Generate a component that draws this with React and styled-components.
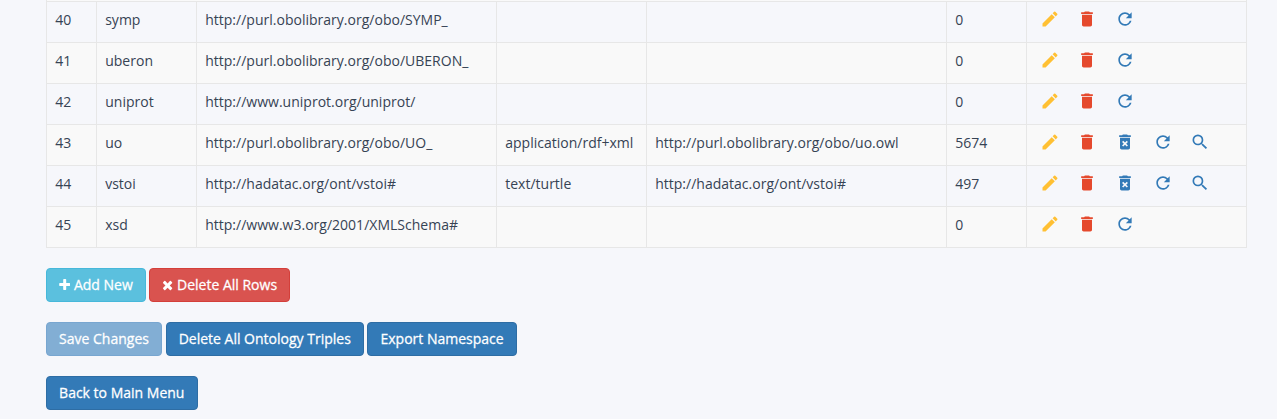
import React from "react";
import styled, { createGlobalStyle } from "styled-components";
import { MdEdit, MdDelete, MdDeleteForever, MdRefresh, MdSearch } from "react-icons/md";

const Global = createGlobalStyle`
  * { box-sizing: border-box; }
  body {
    margin: 0;
    background: #f6f7fb;
    color: #364354;
    font: 14px/20px "Open Sans", sans-serif;
    height: 419px;
    overflow: hidden;
  }
`;

const Page = styled.main`
  padding: 0 30px 0 46px;
`;

const Table = styled.div`
  border: 1px solid #e7e7e7;
  border-width: 0 1px;
`;

const PreviousRow = styled.div`
  height: 2px;
  background: #f9f9f9;
  border-bottom: 1px solid #e7e7e7;
`;

const Row = styled.div`
  display: grid;
  grid-template-columns: 50px 100px 300px 150px 300px 80px 1fr;
  height: 41px;
  border-bottom: 1px solid #e7e7e7;
  background: ${(p) => (p.$striped ? "#f9f9f9" : "transparent")};
`;

const Cell = styled.div`
  padding: 8px 8px 8px 8.2px;
  white-space: nowrap;
  border-right: 1px solid #e7e7e7;
  letter-spacing: 0.01px;
  &:last-child { border-right: 0; }
`;

const Actions = styled(Cell)`
  display: flex;
  align-items: center;
  gap: 17.6px;
  padding: 0 12.8px 5.6px;
`;

const Action = styled.span`
  display: flex;
  font-size: 20px;
  color: ${(p) => p.$color};
`;

const ButtonRow = styled.div`
  display: flex;
  gap: 3.5px;
  margin-top: 20px;
`;

const Button = styled.button`
  display: flex;
  align-items: center;
  gap: 3.4px;
  height: 34px;
  padding: 0 12.1px;
  border: 1px solid ${(p) => p.$border};
  border-radius: 4px;
  background: ${(p) => p.$bg};
  color: #fff;
  font: 400 14px/20px "Open Sans", sans-serif;
  -webkit-text-stroke: 0.27px #fff;
  white-space: nowrap;
`;

const Glyph = styled.svg`
  width: ${(p) => p.$width}px;
  height: 14px;
  fill: currentColor;
`;

const PlusIcon = () => (
  <Glyph $width={11.4} viewBox="192 0 1408 1792">
    <path d="M1600 736v192q0 40-28 68t-68 28h-416v416q0 40-28 68t-68 28h-192q-40 0-68-28t-28-68v-416h-416q-40 0-68-28t-28-68v-192q0-40 28-68t68-28h416v-416q0-40 28-68t68-28h192q40 0 68 28t28 68v416h416q40 0 68 28t28 68z" />
  </Glyph>
);

const TimesIcon = () => (
  <Glyph $width={11.2} viewBox="192 0 1408 1792">
    <path d="M1490 1322q0 40-28 68l-136 136q-28 28-68 28t-68-28l-294-294-294 294q-28 28-68 28t-68-28l-136-136q-28-28-28-68t28-68l294-294-294-294q-28-28-28-68t28-68l136-136q28-28 68-28t68 28l294 294 294-294q28-28 68-28t68 28l136 136q28 28 28 68t-28 68l-294 294 294 294q28 28 28 68z" />
  </Glyph>
);

const rows = [
  [40, "symp", "http://purl.obolibrary.org/obo/SYMP_", "", "", 0],
  [41, "uberon", "http://purl.obolibrary.org/obo/UBERON_", "", "", 0],
  [42, "uniprot", "http://www.uniprot.org/uniprot/", "", "", 0],
  [43, "uo", "http://purl.obolibrary.org/obo/UO_", "application/rdf+xml", "http://purl.obolibrary.org/obo/uo.owl", 5674],
  [44, "vstoi", "http://hadatac.org/ont/vstoi#", "text/turtle", "http://hadatac.org/ont/vstoi#", 497],
  [45, "xsd", "http://www.w3.org/2001/XMLSchema#", "", "", 0],
];

const blue = { $bg: "#337ab7", $border: "#2e6da4" };
const fadedBlue = { $bg: "#82aed4", $border: "#78a6d0" };

export default function App() {
  return (
    <>
      <Global />
      <Page>
        <Table>
          <PreviousRow />
          {rows.map((row) => (
            <Row key={row[0]} $striped={row[0] % 2 === 1}>
              {row.map((value, j) => <Cell key={j}>{value}</Cell>)}
              <Actions>
                <Action $color="#ffc033"><MdEdit /></Action>
                <Action $color="#e5492d"><MdDelete /></Action>
                {row[5] > 0 && <Action $color="#337ab7"><MdDeleteForever /></Action>}
                <Action $color="#337ab7"><MdRefresh /></Action>
                {row[5] > 0 && <Action $color="#337ab7"><MdSearch /></Action>}
              </Actions>
            </Row>
          ))}
        </Table>
        <ButtonRow>
          <Button $bg="#5bc0de" $border="#46b8da"><PlusIcon />Add New</Button>
          <Button $bg="#d9534f" $border="#d43f3a"><TimesIcon />Delete All Rows</Button>
        </ButtonRow>
        <ButtonRow>
          <Button disabled {...fadedBlue}>Save Changes</Button>
          <Button {...blue}>Delete All Ontology Triples</Button>
          <Button {...blue}>Export Namespace</Button>
        </ButtonRow>
        <ButtonRow>
          <Button {...blue}>Back to Main Menu</Button>
        </ButtonRow>
      </Page>
    </>
  );
}
